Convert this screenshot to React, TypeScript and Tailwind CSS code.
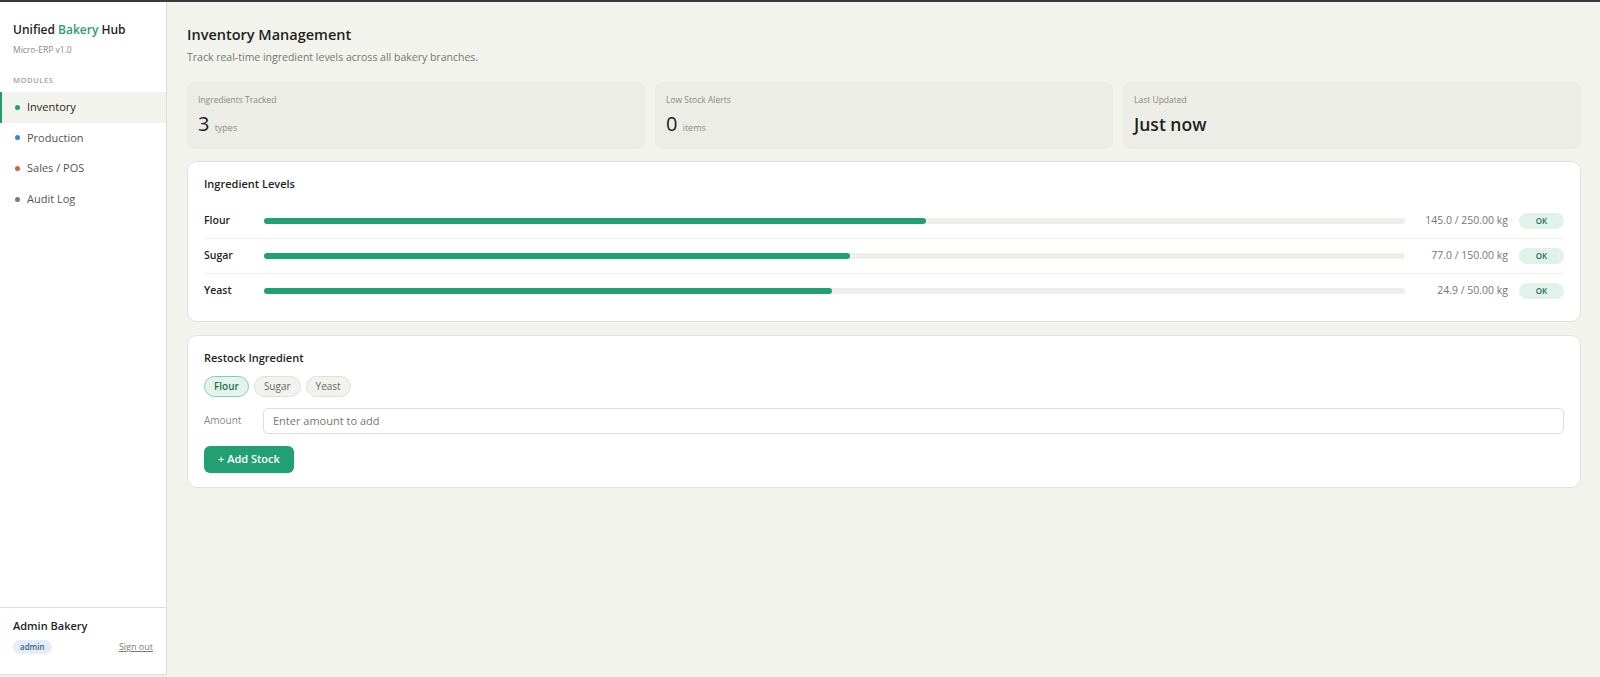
import { useState } from 'react'

const ingredients = [
  { name: 'Flour', qty: 145.0, max: 250 },
  { name: 'Sugar', qty: 77.0, max: 150 },
  { name: 'Yeast', qty: 24.9, max: 50 },
]

const modules = [
  { label: 'Inventory', dot: 'bg-[#1f9d72]', active: true },
  { label: 'Production', dot: 'bg-[#3b82d6]', active: false },
  { label: 'Sales / POS', dot: 'bg-[#d6603b]', active: false },
  { label: 'Audit Log', dot: 'bg-[#7a7a75]', active: false },
]

export default function App() {
  const [picked, setPicked] = useState('Flour')
  const [amount, setAmount] = useState('')

  return (
    <div className="flex h-[677px] w-full border-t-2 border-[#3a3a3a] bg-[#f3f3ee] text-[#1f1f1c]" style={{ fontFamily: '"Open Sans", "Noto Sans", sans-serif' }}>
      {/* Sidebar */}
      <aside className="flex h-[673px] w-[167px] shrink-0 flex-col border-r border-b border-[#deded8] bg-white">
        <div className="px-[13px] pt-[19px]">
          <h1 className="text-[12px] font-semibold leading-[18px]">
            Unified <span className="text-[#2a9d6f]">Bakery</span> Hub
          </h1>
          <p className="mt-[5px] text-[8.5px] text-[#8a8a85]">Micro-ERP v1.0</p>
          <p className="mt-[18px] text-[7.5px] font-semibold tracking-[0.08em] text-[#a3a39e]">MODULES</p>
        </div>
        <nav className="mt-[6px] flex flex-col">
          {modules.map(m => (
            <div
              key={m.label}
              className={`flex h-[30.6px] items-center gap-[7px] border-l-2 pl-[13px] text-[11px] ${m.active ? 'border-[#1f9d72] bg-[#f3f3ee] font-medium text-[#1f1f1c]' : 'border-transparent text-[#55554f]'}`}
            >
              <span className={`h-[5px] w-[5px] rounded-full ${m.dot}`}></span>
              {m.label}
            </div>
          ))}
        </nav>
        <div className="mt-auto border-t border-[#deded8] px-[13px] pt-[10px] pb-[20px]">
          <p className="text-[11px] font-semibold">Admin Bakery</p>
          <div className="mt-[6px] flex items-center justify-between">
            <span className="rounded-full bg-[#e3eefa] px-[7px] py-[1px] text-[8px] font-semibold text-[#3d5f86]">admin</span>
            <span className="text-[9px] text-[#7a7a75] underline">Sign out</span>
          </div>
        </div>
      </aside>

      {/* Main */}
      <main className="flex-1 pl-[20px] pr-[19px] pt-[22px]">
        <h2 className="text-[14.5px] font-semibold leading-[22px]">Inventory Management</h2>
        <p className="mt-[4px] text-[10.5px] text-[#77776f]">Track real-time ingredient levels across all bakery branches.</p>

        <div className="mt-[16px] grid grid-cols-3 gap-[10px]">
          <div className="h-[67px] rounded-[7px] bg-[#ededE8] px-[11px] pt-[12px]">
            <p className="text-[8.5px] text-[#8a8a85]">Ingredients Tracked</p>
            <p className="mt-[5px] text-[20px] font-medium leading-[24px]">3 <span className="text-[9px] font-normal text-[#8a8a85]">types</span></p>
          </div>
          <div className="h-[67px] rounded-[7px] bg-[#ededE8] px-[11px] pt-[12px]">
            <p className="text-[8.5px] text-[#8a8a85]">Low Stock Alerts</p>
            <p className="mt-[5px] text-[20px] font-medium leading-[24px]">0 <span className="text-[9px] font-normal text-[#8a8a85]">items</span></p>
          </div>
          <div className="h-[67px] rounded-[7px] bg-[#ededE8] px-[11px] pt-[12px]">
            <p className="text-[8.5px] text-[#8a8a85]">Last Updated</p>
            <p className="mt-[5px] text-[17.5px] font-semibold leading-[24px]">Just now</p>
          </div>
        </div>

        {/* Ingredient levels */}
        <section className="mt-[12px] rounded-[10px] border border-[#e2e2dc] bg-white px-[16px] pt-[14px] pb-[13px]">
          <h3 className="text-[11px] font-semibold">Ingredient Levels</h3>
          <div className="mt-[12px]">
            {ingredients.map((ing, i) => (
              <div key={ing.name} className={`flex h-[34.7px] items-center ${i < ingredients.length - 1 ? 'border-b border-[#f0f0eb]' : ''}`}>
                <span className="w-[60px] shrink-0 text-[10.5px] font-semibold">{ing.name}</span>
                <div className="h-[6px] flex-1 rounded-full bg-[#efefea]">
                  <div className="h-full rounded-full bg-[#21a074]" style={{ width: `${(ing.qty / ing.max) * 100}%` }}></div>
                </div>
                <span className="w-[103px] shrink-0 text-right text-[10.5px] text-[#77776f]">
                  {ing.qty.toFixed(1)} / {ing.max.toFixed(2)} kg
                </span>
                <span className="ml-[11px] flex h-[16px] w-[45px] shrink-0 items-center justify-center rounded-full bg-[#e1f2ea] text-[8px] font-semibold text-[#1f6f50]">OK</span>
              </div>
            ))}
          </div>
        </section>

        {/* Restock */}
        <section className="mt-[13px] rounded-[10px] border border-[#e2e2dc] bg-white px-[16px] pt-[14px] pb-[14px]">
          <h3 className="text-[11px] font-semibold">Restock Ingredient</h3>
          <div className="mt-[9px] flex gap-[5px]">
            {ingredients.map(ing => (
              <button
                key={ing.name}
                onClick={() => setPicked(ing.name)}
                className={`h-[21px] rounded-full border px-[9px] text-[10px] ${picked === ing.name ? 'border-[#7fcfb0] bg-[#e3f4ec] font-semibold text-[#1f6f50]' : 'border-[#e0e0da] bg-[#f3f3ee] text-[#66665f]'}`}
              >
                {ing.name}
              </button>
            ))}
          </div>
          <div className="mt-[11px] flex items-center">
            <label className="w-[59px] shrink-0 text-[10px] text-[#8a8a85]">Amount</label>
            <input
              value={amount}
              onChange={e => setAmount(e.target.value)}
              placeholder="Enter amount to add"
              className="h-[26px] flex-1 rounded-[5px] border border-[#deded8] px-[9px] text-[11px] outline-none placeholder:text-[#77776f]"
            />
          </div>
          <button className="mt-[12px] h-[27px] rounded-[6px] bg-[#21a074] px-[14px] text-[11px] font-semibold text-white">+ Add Stock</button>
        </section>
      </main>
    </div>
  )
}
